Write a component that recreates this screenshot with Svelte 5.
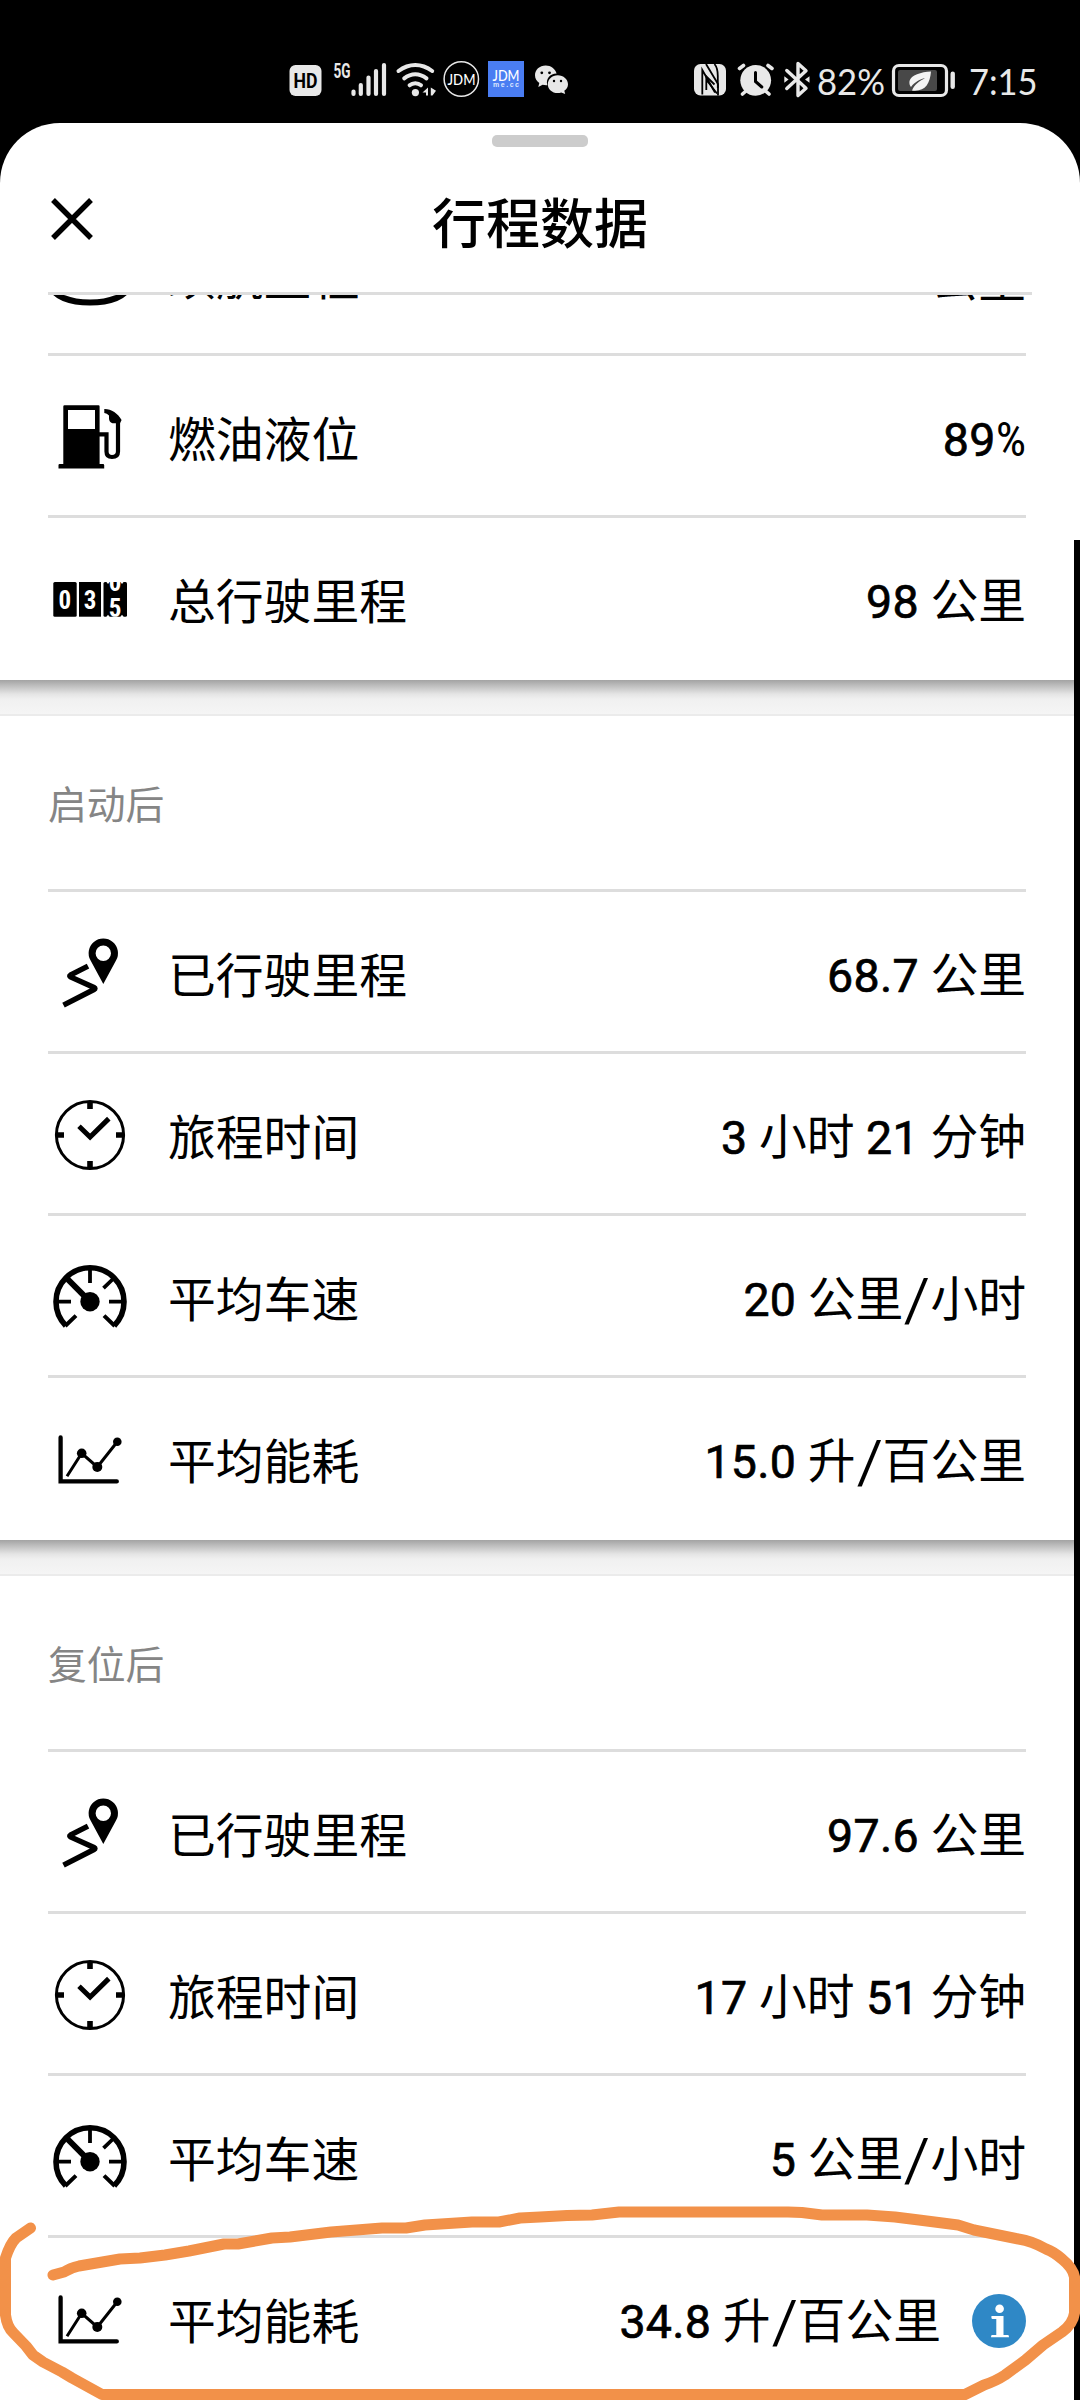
<script>
  const groups = [
    {
      title: '',
      rows: [
        { icon: 'range', label: '续航里程', value: '公里' },
        { icon: 'fuel', label: '燃油液位', value: '89%' },
        { icon: 'odometer', label: '总行驶里程', value: '98 公里' },
      ],
    },
    {
      title: '启动后',
      rows: [
        { icon: 'route', label: '已行驶里程', value: '68.7 公里' },
        { icon: 'clock', label: '旅程时间', value: '3 小时 21 分钟' },
        { icon: 'gauge', label: '平均车速', value: '20 公里/小时' },
        { icon: 'chart', label: '平均能耗', value: '15.0 升/百公里' },
      ],
    },
    {
      title: '复位后',
      rows: [
        { icon: 'route', label: '已行驶里程', value: '97.6 公里' },
        { icon: 'clock', label: '旅程时间', value: '17 小时 51 分钟' },
        { icon: 'gauge', label: '平均车速', value: '5 公里/小时' },
        { icon: 'chart', label: '平均能耗', value: '34.8 升/百公里', info: true },
      ],
    },
  ];

  // Splits a value into numerals, separators and unit text so each gets its own face.
  const tokens = (value) =>
    (value.match(/[\d.]+|%|\/|[^\d.%/]+/g) ?? []).map((text) => ({
      text,
      kind: /^[\d.]/.test(text) ? 'num' : text === '%' ? 'pct' : text === '/' ? 'slash' : 'unit',
    }));
</script>

{#snippet rowIcon(name)}
  <svg class="icon" viewBox="48 0 84 159" aria-hidden="true">
    {#if name === 'range'}
      <ellipse cx="90" cy="93.5" rx="37" ry="15" fill="none" stroke="#000" stroke-width="6" />
    {:else if name === 'fuel'}
      <path fill-rule="evenodd" d="M64.5 49.3H98.5Q99.6 49.3 99.6 50.4V108H103Q104.2 108 104.2 109V112.4H58.5V109Q58.5 108 59.7 108H63.3V50.4Q63.3 49.3 64.5 49.3ZM68 54V73H95V54Z" />
      <path d="M99 78.4H106.5V95.5Q106.5 101 112 101Q118 101 118 95.5V64" fill="none" stroke="#000" stroke-width="4.2" />
      <path d="M104.3 53C111 52.8 118 57.5 121.6 64L120 67.2H112.5Q109 66 109 62.5V59.5Q107 57 104.3 57Z" />
    {:else if name === 'odometer'}
      <rect x="53.3" y="64" width="23.4" height="34.7" rx="1.5" />
      <rect x="79" y="64" width="22" height="34.7" />
      <rect x="103.5" y="64" width="23.5" height="34.7" rx="1.5" />
      <g class="reel">
        <text x="64.8" y="90.8">0</text>
        <text x="90" y="90.8">3</text>
      </g>
      <svg x="103.5" y="64" width="23.5" height="34.7" viewBox="103.5 64 23.5 34.7">
        <g class="reel">
          <text x="115" y="73">0</text>
          <text x="115" y="99">5</text>
        </g>
      </svg>
      <path d="M106 63.5h4l-2 2.5zM120 63.5h4l-2 2.5zM106 99.2h4l-2-2.5zM120 99.2h4l-2-2.5z" fill="#fff" />
    {:else if name === 'route'}
      <path fill-rule="evenodd" d="M103.3 92L90.6 68.6A14.7 14.7 0 1 1 116 68.6ZM103.3 53.5A7.7 7.7 0 1 0 103.3 68.9A7.7 7.7 0 1 0 103.3 53.5Z" />
      <path d="M88 74.2L70.3 83.2Q69 84 70.5 84.9L94 95.5Q96 96.5 94 97.5L63.5 113.2" fill="none" stroke="#000" stroke-width="5.4" />
    {:else if name === 'clock'}
      <circle cx="90" cy="81" r="33.6" fill="none" stroke="#000" stroke-width="3" />
      <path d="M90 47V55M90 107V115M56 81H64M116 81H124" stroke="#000" stroke-width="5.6" />
      <path d="M79 72.2L90.1 83L108.8 64.6" fill="none" stroke="#000" stroke-width="5" />
    {:else if name === 'gauge'}
      <path d="M65.8 109.7A34 34 0 1 1 114.2 109.7" fill="none" stroke="#000" stroke-width="5.6" />
      <path d="M76 99.6L65.2 110M104 99.6L114.8 110" stroke="#000" stroke-width="4" />
      <path d="M90 52V67M57 85.7H71M109 85.7H123M114 62L103.5 72.2" stroke="#000" stroke-width="3.8" />
      <path d="M66 61.5L90 85.7" stroke="#000" stroke-width="6" />
      <circle cx="90" cy="85.7" r="9.7" />
    {:else if name === 'chart'}
      <path d="M60.6 59.5V103.4H116.8" fill="none" stroke="#000" stroke-width="4.3" stroke-linecap="round" />
      <path d="M67 98.2L81.7 75.3L97.3 89L117.3 63.7" fill="none" stroke="#000" stroke-width="3" />
      <circle cx="81.7" cy="75.3" r="4.8" />
      <circle cx="97.3" cy="89" r="5" />
      <circle cx="117.3" cy="63.7" r="4.3" />
    {/if}
  </svg>
{/snippet}

<div class="screen">
  <div class="status">
    <svg class="status-left" viewBox="286 46 286 68">
      <rect x="289.5" y="65" width="32" height="31" rx="6" fill="#e8e8e8" />
      <text class="hd" x="293.5" y="88" textLength="24" lengthAdjust="spacingAndGlyphs">HD</text>
      <text class="fiveg" x="333.5" y="77.5" textLength="17" lengthAdjust="spacingAndGlyphs">5G</text>
      <path d="M353.5 91.5V94M360.8 85V94M368.5 77.5V94M376 71V94M384 65V94" class="stroke" stroke-width="4.2" />
      <path d="M398.5 71Q406.5 65 415.3 65T432.2 71M404.2 78.3Q409.5 74.2 415.3 74.2T426.5 78.3M409.6 85.3Q412 83.2 415.3 83.2T421 85.3" class="stroke" stroke-width="4" />
      <circle cx="415.4" cy="92.6" r="3.6" class="fill" />
      <path d="M428 87.5V95.5H426V92.5H422.5ZM430.8 87.5L436 90.8L432.5 95.5H430.8Z" class="fill" />
      <circle cx="461.3" cy="79" r="17.2" fill="none" stroke="#e8e8e8" stroke-width="1.5" />
      <text class="jdm" x="447.5" y="85.2" textLength="28" lengthAdjust="spacingAndGlyphs">JDM</text>
      <rect x="488" y="61" width="36" height="36" fill="#4a7df2" />
      <text class="jdm" x="492.5" y="81" textLength="27" lengthAdjust="spacingAndGlyphs">JDM</text>
      <text class="mecc" x="493" y="87" textLength="26">me.cc</text>
      <path d="M545.7 65.5C539.5 65.5 535 69.8 535 75.3C535 78.7 536.8 81.3 539.3 83L538.3 87L542.6 84.8C544 85.2 546 85.3 547.3 85.2C545.5 78.7 550 73.8 556.6 73.5C555.2 68.8 551 65.5 545.7 65.5Z" class="fill" />
      <path d="M557.7 75.2C552 75.2 547.8 79.2 547.8 84.2C547.8 89.2 552 93 557.7 93C559 93 560.2 92.8 561.2 92.4L565.2 94L564.3 90.8C566.6 89.2 568 87 568 84.2C568 79.2 563.5 75.2 557.7 75.2Z" class="fill" />
      <g fill="#000">
        <circle cx="541.8" cy="72.8" r="1.4" /><circle cx="549.5" cy="72.8" r="1.4" />
        <circle cx="554" cy="81" r="1.2" /><circle cx="561" cy="81" r="1.2" />
      </g>
    </svg>
    <svg class="status-right" viewBox="690 46 370 68">
      <rect x="694" y="64" width="32" height="31.5" rx="6.5" class="fill" />
      <path d="M702.3 94.5V70L715 92.5" fill="none" stroke="#000" stroke-width="1.8" />
      <path d="M706 64L718 84V95.5" fill="none" stroke="#000" stroke-width="1.8" />
      <path d="M706.3 90V76.5L714.5 84.5M706.5 80L717 93.5M714.5 64Q717.8 68 717.8 76V88" fill="none" stroke="#000" stroke-width="1.8" />
      <path d="M746 91L742.5 94M765.5 91L769 94M739.5 68.5L743.5 65.5M772 68.5L768 65.5" class="stroke" stroke-width="3.6" />
      <circle cx="755.7" cy="80.3" r="15.4" class="fill" />
      <path d="M755.5 72.5V81.5L761.8 87" fill="none" stroke="#000" stroke-width="3" stroke-linecap="round" />
      <path d="M786.8 70.5L806 88.3L798 95.5V63.5L806 70.8L786.8 88.5" fill="none" stroke="#e8e8e8" stroke-width="3.4" stroke-linejoin="round" stroke-linecap="round" />
      <path d="M784.3 76.2L788.6 79.5L784.3 82.7ZM809.5 76.2L805 79.5L809.5 82.7Z" class="fill" />
      <text class="stat" x="817" y="95.3" textLength="68" lengthAdjust="spacingAndGlyphs">82%</text>
      <rect x="893.5" y="65.5" width="53" height="30" rx="5.5" fill="none" stroke="#e8e8e8" stroke-width="3.2" />
      <rect x="898" y="70" width="39" height="21" rx="2" fill="#484848" />
      <path d="M931 71.5C921 72 911 75 909.5 81C909 84 910 86 911 87C915 81.5 920 79.5 925 78C920 81 914.5 84 912 90.5C925 92 930 84 931 71.5Z" fill="#f4f4f4" />
      <rect x="950.5" y="71.5" width="4.4" height="17.5" rx="2.2" class="fill" />
      <text class="stat" x="969" y="95.3" textLength="68.5" lengthAdjust="spacingAndGlyphs">7:15</text>
    </svg>
  </div>

  <main class="sheet">
    <header>
      <div class="handle"></div>
      <div class="bar">
        <svg class="close" viewBox="0 0 42 42"><path d="M2 2L40 40M40 2L2 40" stroke="#000" stroke-width="5.4" /></svg>
        <h1>行程数据</h1>
      </div>
    </header>
    <div class="scroll">
      {#each groups as group}
        <section>
          {#if group.title}<h2>{group.title}</h2>{/if}
          {#each group.rows as row}
            <div class="row">
              {@render rowIcon(row.icon)}
              <span class="label">{row.label}</span>
              <span class="value">{#each tokens(row.value) as t}<span class={t.kind}>{t.text}</span>{/each}</span>
              {#if row.info}
                <svg class="info" viewBox="0 0 54 54">
                  <circle cx="27" cy="27" r="27" fill="#2f88c6" />
                  <circle cx="27.6" cy="14.8" r="4.3" fill="#fff" />
                  <path d="M19.5 22H31.5V41H36Q37 41 37 43.3H19Q19 41 20 41H24.3V25H20.5Q19 25 19.5 22Z" fill="#fff" />
                </svg>
              {/if}
            </div>
          {/each}
        </section>
      {/each}
    </div>
  </main>

  <div class="edge"></div>
  <svg class="marker" viewBox="0 0 1080 220">
    <path d="M30.5 48L16 58Q10 64 5.5 78V135Q7 147 13.5 153L26 166L33 175L43 182L62 192L72 198L102 214.5H965L984 205Q996 201 1005 195L1025.5 180L1043 165L1062 152Q1073 144 1074.5 133V97Q1073 88 1062 79Q1054 72 1046 69Q1032 61 1018.5 59L974 50L958 45L919 40L895 37L867 35H822L802 32.5L788 32H619L592 35L567 35.5L540 37L520 38L499 42H472L425 45L406 48H382L331 52L290 57L272 58L238 64H224L189 71L165 75L140 78L120 79L79 86Q70 88 64 92L53 95" />
  </svg>
</div>

<style>
  :global(body) { background: #000; }
  .screen {
    position: relative;
    width: 1080px;
    height: 2400px;
    overflow: hidden;
    background: #000;
    color: #000;
    font-family: "Noto Sans CJK SC", sans-serif;
  }
  .status {
    box-sizing: border-box;
    height: 123px;
    padding: 46px 20px 0 286px;
    display: flex;
    justify-content: space-between;
    align-items: flex-start;
  }
  .status-left { width: 286px; height: 68px; }
  .status-right { width: 370px; height: 68px; }
  .fill { fill: #e8e8e8; }
  .stroke { fill: none; stroke: #e8e8e8; stroke-linecap: round; }
  .hd { font: 700 21px Roboto, sans-serif; fill: #000; }
  .fiveg { font: 700 20px Roboto, sans-serif; fill: #e8e8e8; }
  .jdm { font: 500 14.5px Lato, sans-serif; fill: #fff; }
  .mecc { font: 700 7px "Liberation Sans", sans-serif; fill: #dbe6ff; }
  .stat { font: 400 37px Lato, sans-serif; fill: #e8e8e8; }

  .sheet {
    height: 2277px;
    background: #fff;
    border-radius: 60px 60px 0 0;
    overflow: hidden;
  }
  header {
    box-sizing: border-box;
    height: 172px;
    padding-top: 12px;
    position: relative;
  }
  header::after {
    content: "";
    position: absolute;
    left: 48px;
    right: 48px;
    bottom: 0;
    height: 3px;
    background: #ddd;
  }
  .handle { width: 96px; height: 12px; border-radius: 5px; background: #ccc; margin: 0 auto; }
  .bar {
    display: grid;
    grid-template-columns: 42px 1fr 42px;
    align-items: center;
    padding: 29px 51px 0;
  }
  .close { width: 42px; height: 42px; margin-top: -4px; }
  h1 { margin: 0; text-align: center; font-size: 54px; line-height: 90px; font-weight: 500; }

  .scroll { height: 2105px; overflow: hidden; }
  section { background: #fff; padding-bottom: 3px; }
  section:first-child { margin-top: -104px; }
  section + section {
    border-top: 36px solid transparent;
    background:
      linear-gradient(#a3a3a3 0, #c4c4c4 7px, #e4e4e4 14px, #f0f0f0 19px, #f5f5f5 34px, #ebebeb 34px, #ebebeb 36px, #fff 36px) border-box;
  }
  h2 {
    margin: 0;
    padding-left: 48px;
    height: 173px;
    line-height: 173px;
    font-size: 38.8px;
    font-weight: 400;
    color: #858585;
  }
  .row {
    box-sizing: border-box;
    height: 162px;
    margin: 0 54px 0 48px;
    border-top: 3px solid #ddd;
    display: flex;
    align-items: center;
    font-size: 47.8px;
    line-height: 159px;
    white-space: pre;
  }
  .icon { width: 84px; height: 159px; flex: none; }
  .reel {
    font: 700 25px Roboto, sans-serif;
    font-stretch: 75%;
    fill: #fff;
    text-anchor: middle;
  }
  .label { margin-left: 36px; padding-top: 2px; }
  .value { margin-left: auto; padding-top: 5px; word-spacing: 0.8px; }
  .num {
    font-family: Roboto, sans-serif;
    font-size: 46.5px;
    letter-spacing: 0.3px;
    -webkit-text-stroke: 0.7px #000;
  }
  .pct { font-family: Roboto, sans-serif; font-size: 48px; font-stretch: 75%; }
  .slash { display: inline-block; width: 27px; text-align: center; transform: scaleX(1.35); }
  .info { width: 54px; height: 54px; margin: 6px 0 0 31px; flex: none; }

  .edge { position: absolute; right: 0; top: 540px; bottom: 0; width: 6px; background: #000; }
  .marker { position: absolute; left: 0; bottom: 0; width: 1080px; height: 220px; }
  .marker path {
    fill: none;
    stroke: #f29149;
    stroke-width: 11;
    stroke-linecap: round;
    stroke-linejoin: round;
  }
</style>
